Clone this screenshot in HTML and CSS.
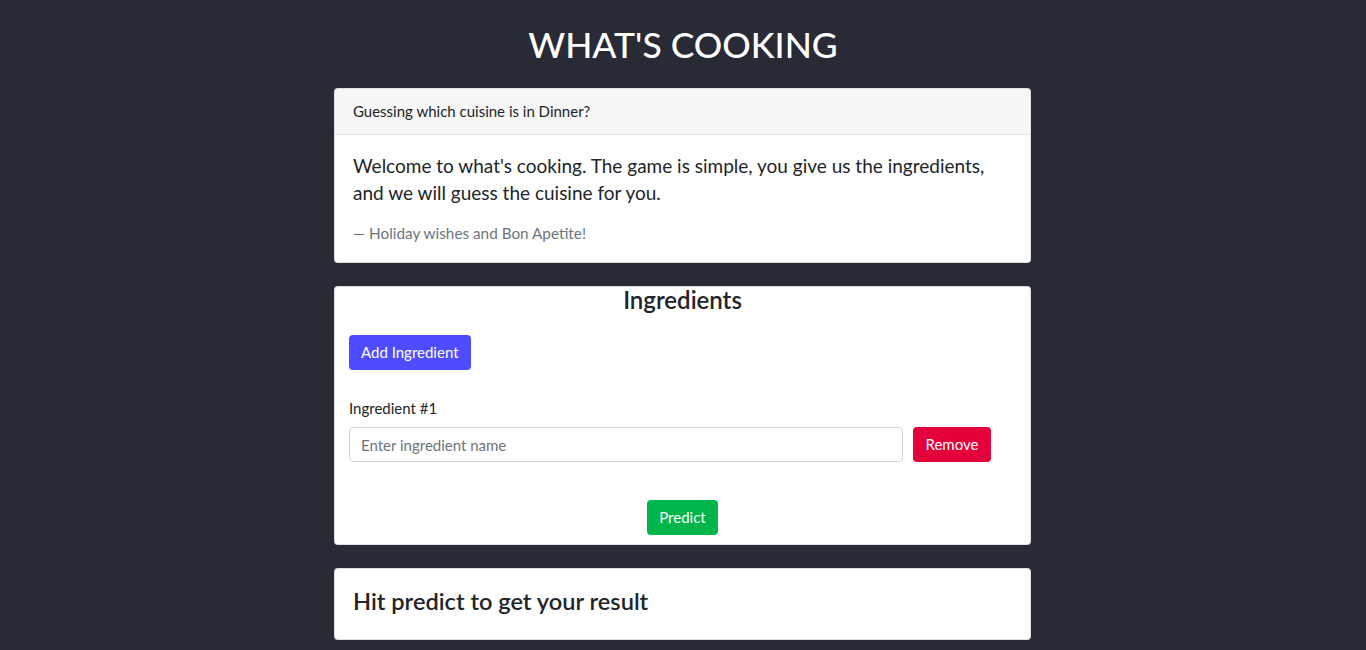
FILE: index.html
```html
<!DOCTYPE html>
<html lang="en">
<head>
<meta charset="utf-8">
<title>What's Cooking</title>
<link rel="stylesheet" href="styles.css">
</head>
<body>
<h1 class="title">WHAT'S COOKING</h1>
<main class="wrap">
  <section class="card">
    <div class="card-header">Guessing which cuisine is in Dinner?</div>
    <div class="card-body">
      <blockquote class="quote">
        <p class="lead">Welcome to what's cooking. The game is simple, you give us the ingredients, and we will guess the cuisine for you.</p>
        <footer class="quote-footer">— Holiday wishes and Bon Apetite!</footer>
      </blockquote>
    </div>
  </section>

  <section class="card ingredients">
    <h4 class="ing-title">Ingredients</h4>
    <div class="ing-actions">
      <button class="btn btn-blue">Add Ingredient</button>
    </div>
    <div class="ing-group">
      <label class="ing-label" for="ing1">Ingredient #1</label>
      <div class="ing-row">
        <input id="ing1" class="ing-input" type="text" placeholder="Enter ingredient name">
        <button class="btn btn-red">Remove</button>
      </div>
    </div>
    <div class="predict-row">
      <button class="btn btn-green">Predict</button>
    </div>
  </section>

  <section class="card result">
    <h4 class="result-text">Hit predict to get your result</h4>
  </section>
</main>
</body>
</html>
```

FILE: styles.css
```css
* { box-sizing: border-box; }

body {
  margin: 0;
  background: #282a36;
  font-family: "Lato", "Noto Sans", sans-serif;
  font-size: 15px;
  line-height: 1.5;
  color: #212529;
}

.title {
  margin: 0;
  padding: 21px 0 19px;
  text-align: center;
  color: #ffffff;
  font-size: 35.5px;
  font-weight: 500;
  line-height: 48px;
}

.wrap {
  width: 697px;
  margin: 0 0 0 calc(50% - 349px);
  display: flex;
  flex-direction: column;
  gap: 23px;
}

.card {
  background: #ffffff;
  border-radius: 4px;
  border: 1px solid rgba(0,0,0,0.125);
  overflow: hidden;
}

.card-header {
  background: #f7f7f7;
  border-bottom: 1px solid #e2e2e2;
  padding: 11px 18px;
  font-size: 15px;
  line-height: 23px;
}

.card-body {
  padding: 17px 18px 18px;
}

.quote { margin: 0; }

.lead {
  margin: 0 0 16px;
  font-size: 19px;
  line-height: 27px;
}

.quote-footer {
  font-size: 15.3px;
  line-height: 22px;
  color: #6c757d;
}

.ingredients {
  padding: 0 14px 9px;
}

.ing-title {
  margin: 0;
  text-align: center;
  font-size: 24px;
  font-weight: 600;
  line-height: 26px;
}

.ing-actions {
  margin-top: 22px;
  display: flex;
}

.btn {
  border: 1px solid transparent;
  border-radius: 4px;
  padding: 5px 11px;
  font-family: inherit;
  font-size: 15px;
  line-height: 23px;
  color: #ffffff;
  cursor: pointer;
}

.btn-blue { background: #4d4dff; }
.btn-red { background: #e4003b; }
.btn-green { background: #00b64a; }

.ing-group {
  margin-top: 27px;
}

.ing-label {
  display: block;
  font-size: 15px;
  line-height: 22px;
  margin-bottom: 8px;
}

.ing-row {
  display: flex;
  gap: 10px;
}

.ing-input {
  width: 554px;
  height: 35px;
  border: 1px solid #ced4da;
  border-radius: 4px;
  padding: 5px 11px;
  font-family: inherit;
  font-size: 15px;
  color: #495057;
}

.ing-input::placeholder { color: #6c757d; }

.ing-row .btn { width: 78px; height: 35px; }

.predict-row {
  margin-top: 38px;
  display: flex;
  justify-content: center;
}

.predict-row .btn { height: 35px; }

.result {
  padding: 19px 18px 24px;
}

.result-text {
  margin: 0;
  font-size: 23.6px;
  font-weight: 600;
  line-height: 27px;
}
```
